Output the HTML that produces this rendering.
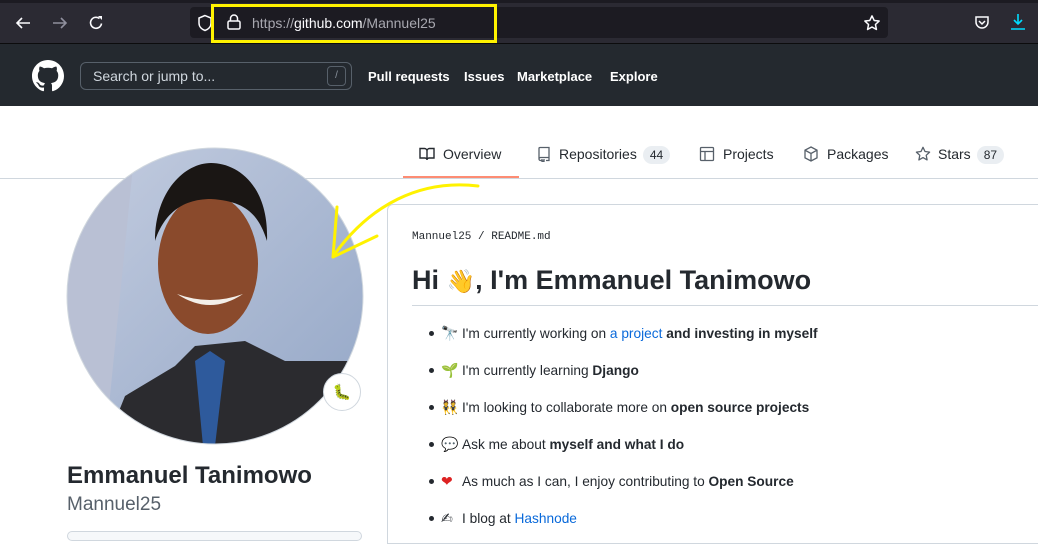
<!DOCTYPE html>
<html><head><meta charset="utf-8"><style>
*{margin:0;padding:0;box-sizing:border-box}
body{width:1038px;height:536px;overflow:hidden;background:#fff;font-family:"Liberation Sans",sans-serif;position:relative;color:#24292f}
.a{position:absolute;white-space:nowrap}
.li{position:absolute;left:429px;font-size:13.7px;color:#24292f}
.li b{font-weight:bold}
.dot{display:inline-block;width:5px;height:5px;border-radius:50%;background:#24292f;vertical-align:middle;margin-right:7px;position:relative;top:-1px}
.em{display:inline-block;width:16px;font-size:14px;margin-right:5px;font-family:"DejaVu Sans",sans-serif}
a{color:#0969da;text-decoration:none}
.tab{position:absolute;top:146px;font-size:14px;color:#24292f}
.cnt{display:inline-block;background:#eaeef2;border-radius:12px;padding:2px 7px;font-size:12px;margin-left:6px}
.nav{position:absolute;top:69px;font-size:13px;font-weight:bold;color:#fff;white-space:nowrap}
</style></head><body>
<div class="a" style="left:0;top:0;width:1038px;height:44px;background:#2b2a33"></div>
<div class="a" style="left:0;top:0;width:1038px;height:3px;background:#1c1b22"></div>
<div class="a" style="left:0;top:43px;width:1038px;height:1px;background:#0c0c0d"></div>
<svg class="a" style="left:14px;top:14px" width="18" height="18" viewBox="0 0 18 18"><path d="M16 9H3M8 4L3 9l5 5" stroke="#fbfbfe" stroke-width="1.6" fill="none"/></svg>
<svg class="a" style="left:51px;top:14px" width="18" height="18" viewBox="0 0 18 18"><path d="M2 9h13M10 4l5 5-5 5" stroke="#8f8f9d" stroke-width="1.6" fill="none"/></svg>
<svg class="a" style="left:87px;top:14px" width="18" height="18" viewBox="0 0 18 18"><path d="M14.5 9.5A5.5 5.5 0 1 1 12.5 4.5" stroke="#fbfbfe" stroke-width="1.6" fill="none"/><path d="M11 2h4v4z" fill="#fbfbfe"/></svg>
<div class="a" style="left:190px;top:7px;width:698px;height:31px;background:#1c1b22;border-radius:4px"></div>
<svg class="a" style="left:197px;top:14px" width="16" height="18" viewBox="0 0 16 18"><path d="M8 1.5L2 4v5c0 4 3 6.5 6 7.5 3-1 6-3.5 6-7.5V4z" stroke="#fbfbfe" stroke-width="1.5" fill="none"/></svg>
<div class="a" style="left:211px;top:4px;width:286px;height:39px;border:3px solid #fff200"></div>
<svg class="a" style="left:226px;top:13px" width="16" height="18" viewBox="0 0 16 18"><rect x="2" y="8" width="12" height="8" rx="1.5" stroke="#fbfbfe" stroke-width="1.5" fill="none"/><path d="M4.5 8V5.5a3.5 3.5 0 0 1 7 0V8" stroke="#fbfbfe" stroke-width="1.5" fill="none"/></svg>
<div class="a" style="left:252px;top:15px;font-size:14px;color:#a8a8b0">https://<span style="color:#fbfbfe">github.com</span>/Mannuel25</div>
<svg class="a" style="left:863px;top:14px" width="18" height="18" viewBox="0 0 24 24"><path d="M12 2.5l2.9 6.1 6.6.8-4.9 4.6 1.3 6.6L12 17.3l-5.9 3.3 1.3-6.6-4.9-4.6 6.6-.8z" stroke="#fbfbfe" stroke-width="2" fill="none" stroke-linejoin="round"/></svg>
<svg class="a" style="left:974px;top:15px" width="16" height="16" viewBox="0 0 16 16"><path d="M2 2h12v5a6 6 0 0 1-12 0z" stroke="#fbfbfe" stroke-width="1.5" fill="none"/><path d="M5 6l3 3 3-3" stroke="#fbfbfe" stroke-width="1.5" fill="none"/></svg>
<svg class="a" style="left:1009px;top:13px" width="18" height="18" viewBox="0 0 18 18"><path d="M9 1v10M5 7l4 4 4-4M2 16h14" stroke="#00ddff" stroke-width="1.6" fill="none"/></svg>
<div class="a" style="left:0;top:44px;width:1038px;height:62px;background:#24292f"></div>
<svg class="a" style="left:32px;top:60px" width="32" height="32" viewBox="0 0 16 16"><path fill="#fff" d="M8 0C3.58 0 0 3.58 0 8c0 3.54 2.290 6.530 5.470 7.590.4.07.55-.17.55-.38 0-.19-.01-.82-.01-1.49-2.010.37-2.530-.49-2.690-.94-.09-.23-.48-.94-.82-1.130-.28-.15-.68-.52-.01-.53.63-.01 1.080.58 1.230.82.72 1.210 1.870.87 2.330.66.07-.52.28-.87.51-1.070-1.780-.2-3.640-.89-3.640-3.950 0-.87.31-1.590.82-2.150-.08-.2-.36-1.020.08-2.120 0 0 .67-.21 2.200.82.64-.18 1.320-.27 2-.27.68 0 1.360.09 2 .27 1.530-1.040 2.200-.82 2.200-.82.44 1.100.16 1.920.08 2.120.51.56.82 1.270.82 2.150 0 3.070-1.870 3.750-3.650 3.950.29.25.54.73.54 1.480 0 1.070-.01 1.930-.01 2.200 0 .21.15.46.55.38A8.013 8.013 0 0016 8c0-4.420-3.580-8-8-8z"/></svg>
<div class="a" style="left:80px;top:62px;width:272px;height:28px;border:1px solid #57606a;border-radius:6px"></div>
<div class="a" style="left:93px;top:68px;font-size:14px;color:#d0d7de">Search or jump to...</div>
<div class="a" style="left:327px;top:66px;width:19px;height:20px;border:1px solid #57606a;border-radius:4px;font-size:10px;color:#8c959f;text-align:center;line-height:18px">/</div>
<div class="nav" style="left:368px">Pull requests</div>
<div class="nav" style="left:464px">Issues</div>
<div class="nav" style="left:517px">Marketplace</div>
<div class="nav" style="left:610px">Explore</div>
<div class="a" style="left:0;top:178px;width:1038px;height:1px;background:#d0d7de"></div>
<div class="a" style="left:403px;top:176px;width:116px;height:2px;background:#fd8c73"></div>
<div class="tab" style="left:419px"><svg width="16" height="16" viewBox="0 0 16 16" style="vertical-align:-3px;margin-right:8px"><path d="M1 2.5h4.5A2.5 2.5 0 0 1 8 5v9a2 2 0 0 0-2-2H1zM15 2.5h-4.5A2.5 2.5 0 0 0 8 5v9a2 2 0 0 1 2-2h5z" stroke="#24292f" stroke-width="1.4" fill="none"/></svg>Overview</div>
<div class="tab" style="left:536px"><svg width="16" height="16" viewBox="0 0 16 16" style="vertical-align:-3px;margin-right:7px"><path d="M3 13V2.5A1 1 0 0 1 4 1.5h9v10H4.5A1.5 1.5 0 0 0 3 13a1.5 1.5 0 0 0 1.5 1.5H6M13 11.5v3h-3M6 13v3l1-1 1 1v-3" stroke="#57606a" stroke-width="1.3" fill="none"/></svg>Repositories<span class="cnt">44</span></div>
<div class="tab" style="left:699px"><svg width="16" height="16" viewBox="0 0 16 16" style="vertical-align:-3px;margin-right:8px"><rect x="1.5" y="1.5" width="13" height="13" rx="1" stroke="#57606a" stroke-width="1.3" fill="none"/><path d="M1.5 5.5h13M6 5.5v9" stroke="#57606a" stroke-width="1.3"/></svg>Projects</div>
<div class="tab" style="left:803px"><svg width="16" height="16" viewBox="0 0 16 16" style="vertical-align:-3px;margin-right:8px"><path d="M8 1l6 3.2v7.6L8 15l-6-3.2V4.2zM2 4.2L8 7.5l6-3.3M8 7.5V15" stroke="#57606a" stroke-width="1.3" fill="none"/></svg>Packages</div>
<div class="tab" style="left:915px"><svg width="16" height="16" viewBox="0 0 16 16" style="vertical-align:-3px;margin-right:7px"><path d="M8 1.3l2 4.2 4.6.6-3.4 3.2.9 4.6L8 11.6 3.9 13.9l.9-4.6L1.4 6.1 6 5.5z" stroke="#57606a" stroke-width="1.3" fill="none" stroke-linejoin="round"/></svg>Stars<span class="cnt">87</span></div>
<svg class="a" style="left:65px;top:146px" width="300" height="300" viewBox="0 0 300 300">
<defs><clipPath id="c"><circle cx="150" cy="150" r="148"/></clipPath>
<linearGradient id="bg" x1="0" y1="0" x2="1" y2="1"><stop offset="0" stop-color="#c4cde0"/><stop offset="1" stop-color="#93a6c6"/></linearGradient></defs>
<g clip-path="url(#c)">
<rect width="300" height="300" fill="url(#bg)"/>
<path d="M0 0H70L40 300H0z" fill="#b9c0d4"/>
<path d="M40 300L60 250 110 220 130 200 180 195 220 215 290 215 300 300z" fill="#2b2b2f"/>
<path d="M130 215l15 -10 15 10 -10 85h-12z" fill="#2e5a9c"/>
<ellipse cx="143" cy="118" rx="50" ry="70" fill="#8a4a2c"/>
<path d="M90 95c0-50 30-78 56-78s58 22 56 78c-8-25-20-40-56-42-32 0-48 18-56 42z" fill="#1a1614"/>
<path d="M112 148q33 22 66 0q-33 12-66 0z" fill="#f3efe9"/>
</g>
<circle cx="150" cy="150" r="148" stroke="#d0d7de" stroke-width="1" fill="none"/>
</svg>
<div class="a" style="left:323px;top:373px;width:38px;height:38px;border-radius:50%;background:#fff;border:1px solid #d0d7de;font-size:15px;text-align:center;line-height:36px;font-family:'DejaVu Sans',sans-serif">🐛</div>
<div class="a" style="left:67px;top:462px;font-size:24px;font-weight:bold;color:#24292f">Emmanuel Tanimowo</div>
<div class="a" style="left:67px;top:494px;font-size:19px;color:#57606a">Mannuel25</div>
<div class="a" style="left:67px;top:531px;width:295px;height:10px;border:1px solid #d0d7de;border-radius:6px;background:#f6f8fa"></div>
<div class="a" style="left:387px;top:204px;width:660px;height:340px;border:1px solid #d0d7de;border-radius:6px 0 0 0"></div>
<div class="a" style="left:412px;top:231px;font-size:11px;font-family:'Liberation Mono',monospace;color:#24292f">Mannuel25 / README.md</div>
<div class="a" style="left:412px;top:265px;font-size:27px;font-weight:bold;color:#24292f;font-family:'Liberation Sans','DejaVu Sans',sans-serif">Hi <span style="font-size:23px">👋</span>, I'm Emmanuel Tanimowo</div>
<div class="a" style="left:412px;top:305px;width:626px;height:1px;background:#d0d7de"></div>
<div class="li" style="top:326px"><span class="dot"></span><span class="em">🔭</span>I'm currently working on <a>a project</a> <b>and investing in myself</b></div>
<div class="li" style="top:363px"><span class="dot"></span><span class="em">🌱</span>I'm currently learning <b>Django</b></div>
<div class="li" style="top:400px"><span class="dot"></span><span class="em">👯</span>I'm looking to collaborate more on <b>open source projects</b></div>
<div class="li" style="top:437px"><span class="dot"></span><span class="em">💬</span>Ask me about <b>myself and what I do</b></div>
<div class="li" style="top:474px"><span class="dot"></span><span class="em" style="color:#d22">❤</span>As much as I can, I enjoy contributing to <b>Open Source</b></div>
<div class="li" style="top:511px"><span class="dot"></span><span class="em">✍</span>I blog at <a>Hashnode</a></div>
<svg class="a" style="left:320px;top:175px" width="170" height="95" viewBox="0 0 170 95"><path d="M158 11C100 4 50 30 14 80" stroke="#fff200" stroke-width="3" fill="none" stroke-linecap="round"/><path d="M17 32L13 82 57 61" stroke="#fff200" stroke-width="3" fill="none" stroke-linecap="round" stroke-linejoin="round"/></svg>
</body></html>
